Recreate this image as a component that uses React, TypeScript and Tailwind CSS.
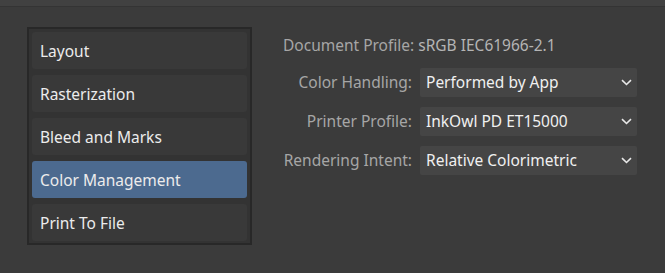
const sections = ["Layout", "Rasterization", "Bleed and Marks", "Color Management", "Print To File"];

const selects = [
  { label: "Color Handling:", value: "Performed by App" },
  { label: "Printer Profile:", value: "InkOwl PD ET15000" },
  { label: "Rendering Intent:", value: "Relative Colorimetric" },
];

function Chevron() {
  return (
    <svg width="11" height="7" viewBox="0 0 11 7" className="text-[#e8e8e8]">
      <path d="M1 1.2l4.5 4.3L10 1.2" fill="none" stroke="currentColor" strokeWidth="1.6" />
    </svg>
  );
}

export default function App() {
  return (
    <div
      className="w-[665px] h-[273px] bg-[#3b3b3b] flex flex-col overflow-hidden"
      style={{ fontFamily: '"Noto Sans", "Open Sans", sans-serif' }}
    >
      <div className="h-[7px] bg-[#414141] border-b border-[#343434] shrink-0" />
      <div className="flex pt-[20px] pl-[27px]">
        <div className="w-[225px] h-[218px] border-2 border-[#282828] bg-[#333333] p-[3px] flex flex-col gap-[6px]">
          {sections.map((s) => (
            <div
              key={s}
              className={`h-[37px] shrink-0 rounded-[3px] flex items-center pl-[8px] pt-[2px] text-[15.5px] text-[#ececec] ${
                s === "Color Management" ? "bg-[#4c6a8f]" : "bg-[#393939]"
              }`}
            >
              {s}
            </div>
          ))}
        </div>
        <div className="ml-[31px] pt-[6px] flex flex-col">
          <div className="text-[15.5px] text-[#a6a6a6] leading-[24px] whitespace-nowrap">
            Document Profile: <span className="text-[#b4b4b4]">sRGB IEC61966-2.1</span>
          </div>
          <div className="mt-[11px] flex flex-col gap-[10px]">
            {selects.map((r) => (
              <div key={r.label} className="flex items-center">
                <div className="w-[137px] text-right pr-[8px] text-[15.5px] text-[#a6a6a6] whitespace-nowrap">
                  {r.label}
                </div>
                <div className="w-[217px] h-[29px] bg-[#454545] rounded-[2px] flex items-center justify-between pl-[6px] pr-[5px] text-[15.5px] text-[#f0f0f0]">
                  <span>{r.value}</span>
                  <Chevron />
                </div>
              </div>
            ))}
          </div>
        </div>
      </div>
    </div>
  );
}
